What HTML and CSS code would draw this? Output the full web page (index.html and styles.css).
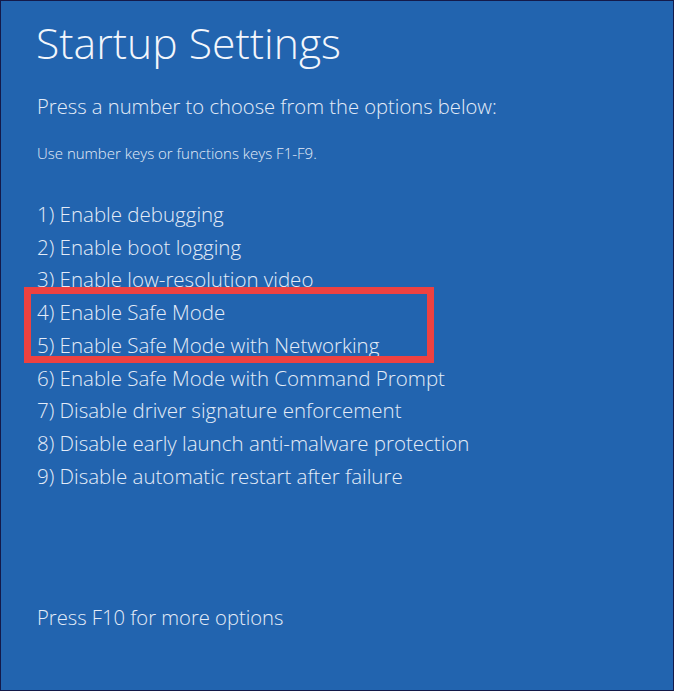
FILE: index.html
```html
<!DOCTYPE html>
<html lang="en">
<head>
    <meta charset="UTF-8">
    <title>Startup Settings</title>
    <link rel="stylesheet" href="styles.css">
</head>
<body>
    <div class="screen">
        <h1>Startup Settings</h1>
        <p class="prompt">Press a number to choose from the options below:</p>
        <p class="hint">Use number keys or functions keys F1-F9.</p>
        <ul class="options">
            <li>1) Enable debugging</li>
            <li>2) Enable boot logging</li>
            <li>3) Enable low-resolution video</li>
            <li class="marked">
                <div>4) Enable Safe Mode</div>
                <div>5) Enable Safe Mode with Networking</div>
            </li>
            <li>6) Enable Safe Mode with Command Prompt</li>
            <li>7) Disable driver signature enforcement</li>
            <li>8) Disable early launch anti-malware protection</li>
            <li>9) Disable automatic restart after failure</li>
        </ul>
        <p class="more">Press F10 for more options</p>
    </div>
</body>
</html>
```

FILE: styles.css
```css
html, body {
    margin: 0;
    height: 100%;
    background: #141a4a;
}
.screen {
    box-sizing: border-box;
    height: 691px;
    border: 1px solid #141a4a;
    background: #2264af;
    color: #e4ecf8;
    font-family: "Open Sans", sans-serif;
    font-weight: 300;
    padding: 15px 0 0 35px;
    display: flex;
    flex-direction: column;
}
h1 {
    margin: 0;
    font-weight: 300;
    font-size: 42.7px;
    line-height: 54px;
    color: #f2f6fc;
}
.prompt {
    margin: 23px 0 0 1px;
    font-size: 20.2px;
    line-height: 26px;
}
.hint {
    margin: 24px 0 0 1px;
    font-size: 15px;
    line-height: 20px;
}
.options {
    list-style: none;
    margin: 35px 0 0 1px;
    padding: 0;
    font-size: 20.5px;
    line-height: 32.7px;
}
.options .marked {
    position: relative;
}
.options .marked::before {
    content: "";
    position: absolute;
    top: -9px;
    bottom: -1px;
    left: -13px;
    width: 410px;
    box-sizing: border-box;
    border: 7px solid #ee4140;
}
.more {
    margin: 112px 0 0 1px;
    font-size: 20.2px;
    line-height: 26px;
}
```
